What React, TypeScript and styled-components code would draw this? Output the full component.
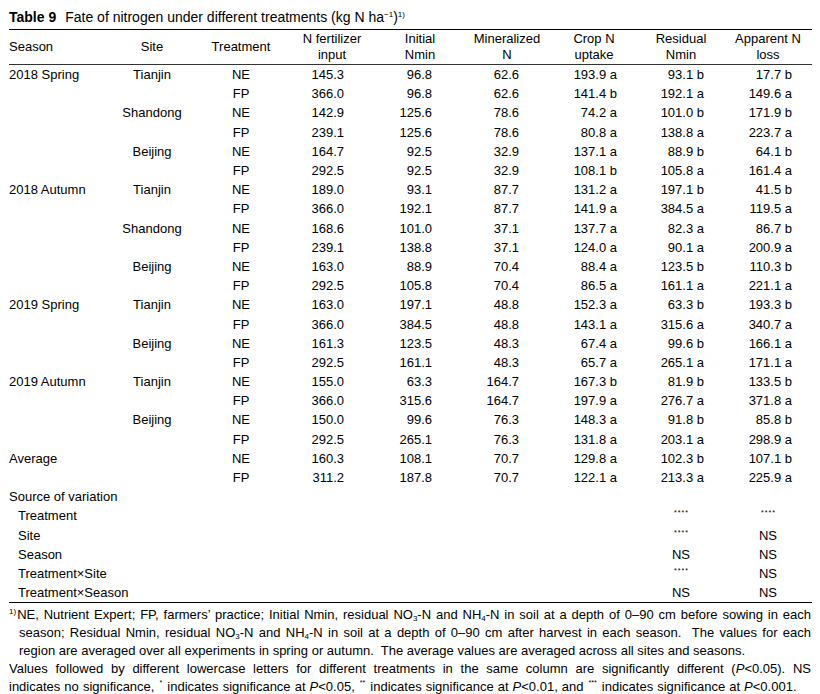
import React from "react";
import styled, { createGlobalStyle } from "styled-components";

const GlobalStyle = createGlobalStyle`
  html, body { margin: 0; padding: 0; background: #fff; }
  body {
    font-family: "Liberation Sans", Arial, Helvetica, sans-serif;
    color: #000;
    -webkit-font-smoothing: antialiased;
  }
`;

const COLS = "97px 92px 86px 96px 80px 94px 80px 94px 80px";

const Page = styled.div`
  width: 820px;
  box-sizing: border-box;
  padding: 8px 8px 0 9px;
`;

const Title = styled.div`
  font-size: 14px;
  line-height: 18px;
  height: 21px;
  white-space: nowrap;
`;

const TitleLabel = styled.span`
  font-weight: bold;
  font-size: 14px;
  margin-right: 9px;
`;

const Sup = styled.sup`
  font-size: 8px;
  line-height: 0;
  vertical-align: 5px;
`;

const Sub = styled.sub`
  font-size: 8px;
  line-height: 0;
  vertical-align: -2px;
`;

const Table = styled.div`
  width: 803px;
  border-top: 1px solid #000;
  border-bottom: 1px solid #000;
`;

const HeaderRow = styled.div`
  display: grid;
  grid-template-columns: ${COLS};
  height: 34px;
  align-items: center;
  border-bottom: 1px solid #333;
`;

const HeadCell = styled.div<{ $align?: "left" | "center" }>`
  font-size: 13px;
  line-height: 16px;
  text-align: ${(p) => p.$align ?? "center"};
  white-space: nowrap;
`;

const Row = styled.div`
  display: grid;
  grid-template-columns: ${COLS};
  height: 19.2px;
  align-items: center;
`;

const Cell = styled.div<{ $align: "left" | "center" | "right"; $pr?: number }>`
  font-size: 13px;
  line-height: 19px;
  white-space: nowrap;
  text-align: ${(p) => p.$align};
  padding-right: ${(p) => p.$pr ?? 0}px;
`;

const SourceLabel = styled.div<{ $indent?: boolean }>`
  grid-column: 1 / 8;
  font-size: 13px;
  line-height: 19px;
  white-space: nowrap;
  padding-left: ${(p) => (p.$indent ? 9 : 0)}px;
`;

const Stars = styled.span`
  font-size: 7px;
  letter-spacing: 1px;
  margin-left: 1px;
  vertical-align: 5px;
  line-height: 0;
`;

const Notes = styled.div`
  width: 802px;
  padding-top: 3px;
  font-size: 13px;
  line-height: 18px;
`;

const NoteLine = styled.div<{ $justify?: boolean; $indent?: boolean; $spread?: number }>`
  white-space: ${(p) => (p.$justify ? "normal" : "nowrap")};
  overflow: hidden;
  text-align: ${(p) => (p.$justify ? "justify" : "left")};
  text-align-last: ${(p) => (p.$justify ? "justify" : "left")};
  margin-left: ${(p) => (p.$indent ? 10 : 0)}px;
  word-spacing: ${(p) => p.$spread ?? 0}px;
  height: 18px;
`;

const NoteMark = styled.sup`
  font-size: 8px;
  line-height: 0;
  vertical-align: 5px;
  margin-right: 1px;
`;

const StarMark = styled.sup`
  font-size: 7px;
  line-height: 0;
  vertical-align: 6px;
  margin: 0 1px;
`;

const Ital = styled.i`
  font-style: italic;
`;

type Col = { align: "left" | "center" | "right"; pr?: number };
const colDefs: Col[] = [
  { align: "left" },
  { align: "center" },
  { align: "center" },
  { align: "right", pr: 36 },
  { align: "right", pr: 28 },
  { align: "right", pr: 35 },
  { align: "right", pr: 17 },
  { align: "right", pr: 24 },
  { align: "right", pr: 16 },
];

const rows: string[][] = [
  ["2018 Spring", "Tianjin", "NE", "145.3", "96.8", "62.6", "193.9 a", "93.1 b", "17.7 b"],
  ["", "", "FP", "366.0", "96.8", "62.6", "141.4 b", "192.1 a", "149.6 a"],
  ["", "Shandong", "NE", "142.9", "125.6", "78.6", "74.2 a", "101.0 b", "171.9 b"],
  ["", "", "FP", "239.1", "125.6", "78.6", "80.8 a", "138.8 a", "223.7 a"],
  ["", "Beijing", "NE", "164.7", "92.5", "32.9", "137.1 a", "88.9 b", "64.1 b"],
  ["", "", "FP", "292.5", "92.5", "32.9", "108.1 b", "105.8 a", "161.4 a"],
  ["2018 Autumn", "Tianjin", "NE", "189.0", "93.1", "87.7", "131.2 a", "197.1 b", "41.5 b"],
  ["", "", "FP", "366.0", "192.1", "87.7", "141.9 a", "384.5 a", "119.5 a"],
  ["", "Shandong", "NE", "168.6", "101.0", "37.1", "137.7 a", "82.3 a", "86.7 b"],
  ["", "", "FP", "239.1", "138.8", "37.1", "124.0 a", "90.1 a", "200.9 a"],
  ["", "Beijing", "NE", "163.0", "88.9", "70.4", "88.4 a", "123.5 b", "110.3 b"],
  ["", "", "FP", "292.5", "105.8", "70.4", "86.5 a", "161.1 a", "221.1 a"],
  ["2019 Spring", "Tianjin", "NE", "163.0", "197.1", "48.8", "152.3 a", "63.3 b", "193.3 b"],
  ["", "", "FP", "366.0", "384.5", "48.8", "143.1 a", "315.6 a", "340.7 a"],
  ["", "Beijing", "NE", "161.3", "123.5", "48.3", "67.4 a", "99.6 b", "166.1 a"],
  ["", "", "FP", "292.5", "161.1", "48.3", "65.7 a", "265.1 a", "171.1 a"],
  ["2019 Autumn", "Tianjin", "NE", "155.0", "63.3", "164.7", "167.3 b", "81.9 b", "133.5 b"],
  ["", "", "FP", "366.0", "315.6", "164.7", "197.9 a", "276.7 a", "371.8 a"],
  ["", "Beijing", "NE", "150.0", "99.6", "76.3", "148.3 a", "91.8 b", "85.8 b"],
  ["", "", "FP", "292.5", "265.1", "76.3", "131.8 a", "203.1 a", "298.9 a"],
  ["Average", "", "NE", "160.3", "108.1", "70.7", "129.8 a", "102.3 b", "107.1 b"],
  ["", "", "FP", "311.2", "187.8", "70.7", "122.1 a", "213.3 a", "225.9 a"],
];

const sources: [string, string, string][] = [
  ["Treatment", "****", "****"],
  ["Site", "****", "NS"],
  ["Season", "NS", "NS"],
  ["Treatment×Site", "****", "NS"],
  ["Treatment×Season", "NS", "NS"],
];

const Sig = ({ v }: { v: string }) => (v === "NS" ? <>NS</> : <Stars>{v}</Stars>);

export default function App() {
  return (
    <>
      <GlobalStyle />
      <Page>
        <Title>
          <TitleLabel>Table 9</TitleLabel>
          Fate of nitrogen under different treatments (kg N ha<Sup>−1</Sup>)<Sup>1)</Sup>
        </Title>
        <Table>
          <HeaderRow>
            <HeadCell $align="left">Season</HeadCell>
            <HeadCell>Site</HeadCell>
            <HeadCell>Treatment</HeadCell>
            <HeadCell>N fertilizer<br />input</HeadCell>
            <HeadCell>Initial<br />Nmin</HeadCell>
            <HeadCell>Mineralized<br />N</HeadCell>
            <HeadCell>Crop N<br />uptake</HeadCell>
            <HeadCell>Residual<br />Nmin</HeadCell>
            <HeadCell>Apparent N<br />loss</HeadCell>
          </HeaderRow>
          {rows.map((r, i) => (
            <Row key={i}>
              {r.map((v, j) => (
                <Cell key={j} $align={colDefs[j].align} $pr={colDefs[j].pr}>
                  {v}
                </Cell>
              ))}
            </Row>
          ))}
          <Row>
            <SourceLabel>Source of variation</SourceLabel>
          </Row>
          {sources.map(([label, a, b]) => (
            <Row key={label}>
              <SourceLabel $indent>{label}</SourceLabel>
              <Cell $align="center">
                <Sig v={a} />
              </Cell>
              <Cell $align="center">
                <Sig v={b} />
              </Cell>
            </Row>
          ))}
        </Table>
        <Notes>
          <NoteLine $justify>
            <NoteMark>1)</NoteMark>NE, Nutrient Expert; FP, farmers’ practice; Initial Nmin, residual NO<Sub>3</Sub>-N and NH<Sub>4</Sub>-N in soil at a depth of 0–90 cm before sowing in each
          </NoteLine>
          <NoteLine $justify $indent>
            season; Residual Nmin, residual NO<Sub>3</Sub>-N and NH<Sub>4</Sub>-N in soil at a depth of 0–90 cm after harvest in each season.&nbsp; The values for each
          </NoteLine>
          <NoteLine $indent>
            region are averaged over all experiments in spring or autumn.&nbsp; The average values are averaged across all sites and seasons.
          </NoteLine>
          <NoteLine $justify>
            Values followed by different lowercase letters for different treatments in the same column are significantly different (<Ital>P</Ital>&lt;0.05). NS
          </NoteLine>
          <NoteLine $spread={0.45}>
            indicates no significance, <StarMark>*</StarMark> indicates significance at <Ital>P</Ital>&lt;0.05, <StarMark>**</StarMark> indicates significance at <Ital>P</Ital>&lt;0.01, and <StarMark>***</StarMark> indicates significance at <Ital>P</Ital>&lt;0.001.
          </NoteLine>
        </Notes>
      </Page>
    </>
  );
}
